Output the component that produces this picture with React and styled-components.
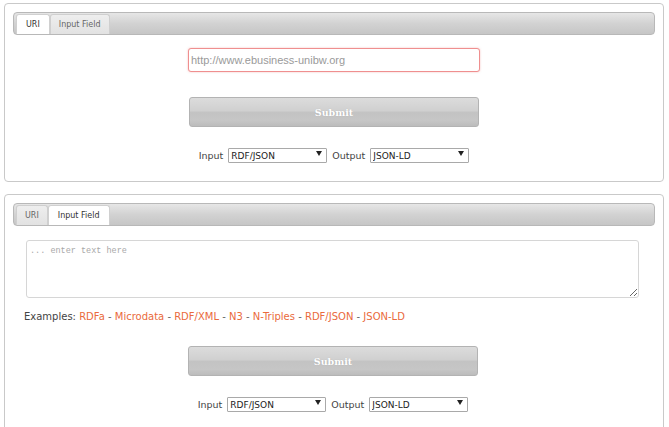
import React from "react";
import styled, { createGlobalStyle } from "styled-components";

const Global = createGlobalStyle`
  html, body { margin: 0; padding: 0; background: #fff; }
  body { font-family: "Liberation Sans", Arial, sans-serif; font-size: 11px; color: #333; }
`;

const Page = styled.div`
  padding: 3px 5px 0 4px;
  display: flex;
  flex-direction: column;
  gap: 12px;
`;

const Panel = styled.div`
  border: 1px solid #c9c9c9;
  border-radius: 4px;
  padding: 8px 8px ${(p) => p.$pb}px;
  display: flex;
  flex-direction: column;
  align-items: stretch;
`;

const TabBar = styled.div`
  height: 23px;
  box-sizing: border-box;
  border: 1px solid #b8b8b8;
  border-radius: 4px;
  background: linear-gradient(#e6e6e6, #d2d2d2 50%, #c6c6c6);
  padding: 2px 0 0 2px;
  display: flex;
  align-items: flex-end;
`;

const Tab = styled.div`
  height: 20px;
  box-sizing: border-box;
  padding: 0 ${(p) => (p.$active ? 9 : 8)}px;
  display: flex;
  align-items: center;
  font-family: "DejaVu Sans", Verdana, sans-serif;
  font-size: 8px;
  color: ${(p) => (p.$active ? "#333" : "#666")};
  background: ${(p) => (p.$active ? "#fff" : "linear-gradient(#eeeeee, #e2e2e2)")};
  border: 1px solid ${(p) => (p.$active ? "#d0d0d0" : "#cfcfcf")};
  border-bottom: none;
  border-radius: 3px 3px 0 0;
`;

const Center = styled.div`
  display: flex;
  flex-direction: column;
  align-items: center;
`;

const UrlInput = styled.input`
  width: 292px;
  height: 24px;
  box-sizing: border-box;
  margin-top: 13px;
  border: 1px solid #ef8f8f;
  border-radius: 3px;
  box-shadow: 0 0 2px rgba(240, 120, 120, 0.5);
  padding: 0 2px;
  font-family: "Liberation Sans", Arial, sans-serif;
  font-size: 11px;
  color: #333;
  outline: none;
  &::placeholder { color: #9a9a9a; }
`;

const SubmitButton = styled.button`
  width: ${(p) => p.$w}px;
  height: 30px;
  margin-top: ${(p) => p.$mt}px;
  border: 1px solid #b3b3b3;
  border-radius: 3px;
  background: linear-gradient(#dcdcdc, #d0d0d0 45%, #c3c3c3 52%, #c6c6c6 80%, #bcbcbc);
  color: #fff;
  font-family: "DejaVu Serif", Georgia, serif;
  font-weight: bold;
  font-size: 9.5px;
  text-shadow: 0 0 1px rgba(0,0,0,0.15);
  padding: 0;
`;

const SelectRow = styled.div`
  margin-top: ${(p) => p.$mt}px;
  display: flex;
  align-items: center;
  gap: 5px;
  font-family: "DejaVu Sans", Verdana, sans-serif;
  font-size: 9.5px;
  color: #444;
`;

const Label = styled.span``;

const SelectWrap = styled.div`
  position: relative;
  width: 99px;
  height: 15px;
`;

const Select = styled.select`
  appearance: none;
  -webkit-appearance: none;
  width: 100%;
  height: 100%;
  box-sizing: border-box;
  border: 1px solid #a9a9a9;
  border-radius: 1px;
  background: #fff;
  font-family: "DejaVu Sans", Verdana, sans-serif;
  font-size: 9px;
  color: #222;
  padding: 0 2px;
  margin: 0;
  outline: none;
`;

const Arrow = styled.span`
  position: absolute;
  right: 5px;
  top: 3px;
  width: 0;
  height: 0;
  border-left: 3px solid transparent;
  border-right: 3px solid transparent;
  border-top: 5px solid #222;
  pointer-events: none;
`;

const Body = styled.div`
  padding: 0 13px 0 11px;
  display: flex;
  flex-direction: column;
`;

const TextArea = styled.textarea`
  margin: 14px 3px 0 2px;
  height: 58px;
  box-sizing: border-box;
  border: 1px solid #d6d6d6;
  border-radius: 3px;
  padding: 5px 3px;
  resize: vertical;
  font-family: "Liberation Mono", "Courier New", monospace;
  font-size: 8.5px;
  color: #333;
  outline: none;
  &::placeholder { color: #a8a8a8; }
`;

const Examples = styled.div`
  margin-top: 13px;
  font-family: "DejaVu Sans", Verdana, sans-serif;
  font-size: 10px;
  color: #444;
`;

const Link = styled.a`
  color: #ea6a3c;
  text-decoration: none;
`;

const Sep = styled.span`
  color: #666;
`;

function Selects({ mt }) {
  return (
    <SelectRow $mt={mt}>
      <Label>Input</Label>
      <SelectWrap>
        <Select defaultValue="rdfjson">
          <option value="rdfjson">RDF/JSON</option>
          <option value="rdfxml">RDF/XML</option>
        </Select>
        <Arrow />
      </SelectWrap>
      <Label>Output</Label>
      <SelectWrap>
        <Select defaultValue="jsonld">
          <option value="jsonld">JSON-LD</option>
          <option value="n3">N3</option>
        </Select>
        <Arrow />
      </SelectWrap>
    </SelectRow>
  );
}

const links = ["RDFa", "Microdata", "RDF/XML", "N3", "N-Triples", "RDF/JSON", "JSON-LD"];

export default function App() {
  return (
    <>
      <Global />
      <Page>
        <Panel $pb={18}>
          <TabBar>
            <Tab $active>URI</Tab>
            <Tab>Input Field</Tab>
          </TabBar>
          <Center>
            <UrlInput placeholder="http://www.ebusiness-unibw.org" />
            <SubmitButton $w={290} $mt={25}>Submit</SubmitButton>
            <Selects mt={21} />
          </Center>
        </Panel>
        <Panel $pb={30}>
          <TabBar>
            <Tab>URI</Tab>
            <Tab $active>Input Field</Tab>
          </TabBar>
          <Body>
            <TextArea placeholder="... enter text here" />
            <Examples>
              Examples:{" "}
              {links.map((l, i) => (
                <React.Fragment key={l}>
                  {i > 0 && <Sep> - </Sep>}
                  <Link href="#">{l}</Link>
                </React.Fragment>
              ))}
            </Examples>
            <Center>
              <SubmitButton $w={290} $mt={24}>Submit</SubmitButton>
              <Selects mt={21} />
            </Center>
          </Body>
        </Panel>
      </Page>
    </>
  );
}
